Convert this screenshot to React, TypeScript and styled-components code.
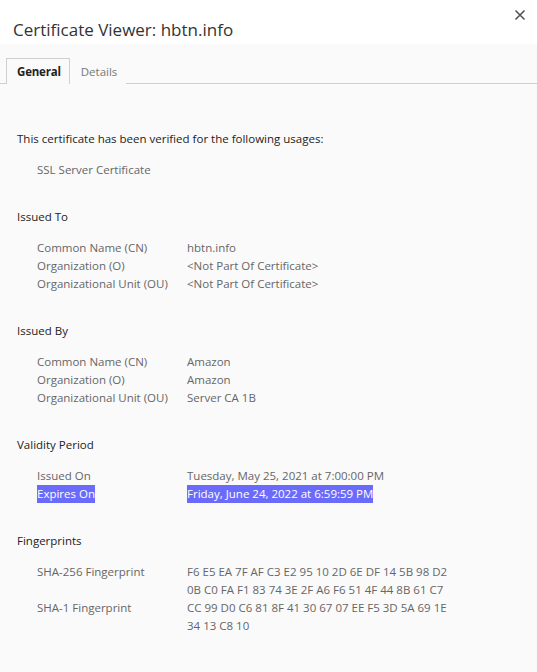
import React from 'react'
import styled, { createGlobalStyle } from 'styled-components'

const GlobalStyle = createGlobalStyle`
  html, body {
    margin: 0;
    padding: 0;
    background: #fafafa;
  }
  body {
    font-family: "Open Sans", "Noto Sans", sans-serif;
    -webkit-font-smoothing: antialiased;
  }
`

const Dialog = styled.div`
  width: 537px;
  height: 672px;
  display: flex;
  flex-direction: column;
  background: #fafafa;
  overflow: hidden;
`

const Header = styled.div`
  height: 44px;
  background: #fff;
  display: flex;
  align-items: flex-start;
  justify-content: space-between;
  box-sizing: border-box;
  padding: 19px 10px 0 13px;
`

const Title = styled.h1`
  margin: 0;
  font-size: 17px;
  font-weight: 400;
  line-height: 22px;
  color: #333;
`

const CloseButton = styled.button`
  border: 0;
  background: none;
  padding: 0;
  margin-top: -11px;
  width: 14px;
  height: 14px;
  cursor: pointer;
`

const TabBar = styled.div`
  display: flex;
  align-items: flex-end;
  margin-top: 14px;
  padding-left: 6px;
  border-bottom: 1px solid #cfcfcf;
  height: 25px;
`

const Tab = styled.div<{ $active?: boolean }>`
  box-sizing: border-box;
  height: 26px;
  padding: 0 8px 1px 10px;
  display: flex;
  align-items: center;
  font-size: 11.5px;
  color: ${p => (p.$active ? '#222' : '#777')};
  font-weight: ${p => (p.$active ? 700 : 400)};
  letter-spacing: ${p => (p.$active ? '-0.2px' : '0')};
  background: #fafafa;
  border: 1px solid ${p => (p.$active ? '#cfcfcf' : 'transparent')};
  border-bottom: none;
  margin-bottom: -1px;
`

const Content = styled.div`
  padding: 46px 17px 0 17px;
  font-size: 11.5px;
  line-height: 18px;
`

const Intro = styled.div`
  color: #222;
`

const Section = styled.div`
  margin-top: 29px;
  &:first-child {
    margin-top: 0;
  }
`

const Heading = styled.div`
  color: #222;
  margin-bottom: 13px;
`

const Rows = styled.div`
  display: grid;
  grid-template-columns: 150px 1fr;
  padding-left: 20px;
  color: #666;
`

const Single = styled.div`
  padding-left: 20px;
  color: #666;
  margin-top: 13px;
`

const Cell = styled.div``

const Line = styled.div`
  white-space: nowrap;
`

const Selected = styled.span`
  background: #6b6bfb;
  color: #fff;
  display: inline-block;
`

type Row = { label: string; value: string[]; selected?: boolean }

const sections: { title: string; rows: Row[] }[] = [
  {
    title: 'Issued To',
    rows: [
      { label: 'Common Name (CN)', value: ['hbtn.info'] },
      { label: 'Organization (O)', value: ['<Not Part Of Certificate>'] },
      { label: 'Organizational Unit (OU)', value: ['<Not Part Of Certificate>'] },
    ],
  },
  {
    title: 'Issued By',
    rows: [
      { label: 'Common Name (CN)', value: ['Amazon'] },
      { label: 'Organization (O)', value: ['Amazon'] },
      { label: 'Organizational Unit (OU)', value: ['Server CA 1B'] },
    ],
  },
  {
    title: 'Validity Period',
    rows: [
      { label: 'Issued On', value: ['Tuesday, May 25, 2021 at 7:00:00 PM'] },
      { label: 'Expires On', value: ['Friday, June 24, 2022 at 6:59:59 PM'], selected: true },
    ],
  },
  {
    title: 'Fingerprints',
    rows: [
      {
        label: 'SHA-256 Fingerprint',
        value: [
          'F6 E5 EA 7F AF C3 E2 95 10 2D 6E DF 14 5B 98 D2',
          '0B C0 FA F1 83 74 3E 2F A6 F6 51 4F 44 8B 61 C7',
        ],
      },
      {
        label: 'SHA-1 Fingerprint',
        value: ['CC 99 D0 C6 81 8F 41 30 67 07 EE F5 3D 5A 69 1E', '34 13 C8 10'],
      },
    ],
  },
]

export default function App() {
  return (
    <Dialog>
      <GlobalStyle />
      <Header>
        <Title>Certificate Viewer: hbtn.info</Title>
        <CloseButton aria-label="Close">
          <svg width="14" height="14" viewBox="0 0 14 14">
            <path d="M2.5 2.5 L11.5 11.5 M11.5 2.5 L2.5 11.5" stroke="#555" strokeWidth="1.6" />
          </svg>
        </CloseButton>
      </Header>
      <TabBar>
        <Tab $active>General</Tab>
        <Tab>Details</Tab>
      </TabBar>
      <Content>
        <Section>
          <Intro>This certificate has been verified for the following usages:</Intro>
          <Single>SSL Server Certificate</Single>
        </Section>
        {sections.map(s => (
          <Section key={s.title}>
            <Heading>{s.title}</Heading>
            <Rows>
              {s.rows.map(r => (
                <React.Fragment key={r.label}>
                  <Cell>{r.selected ? <Selected>{r.label}</Selected> : r.label}</Cell>
                  <Cell>
                    {r.value.map(v => (
                      <Line key={v}>{r.selected ? <Selected>{v}</Selected> : v}</Line>
                    ))}
                  </Cell>
                </React.Fragment>
              ))}
            </Rows>
          </Section>
        ))}
      </Content>
    </Dialog>
  )
}
